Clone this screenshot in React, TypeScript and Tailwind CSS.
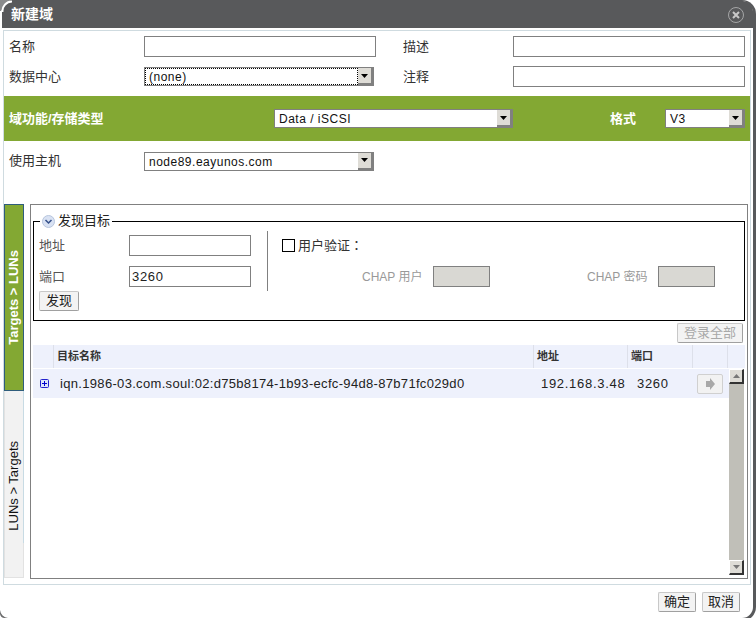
import { useState } from 'react';

const font = "font-['Liberation_Sans','Noto_Sans_CJK_SC',sans-serif]";

function TextInput({ className, value, disabled }: { className: string; value?: string; disabled?: boolean }) {
    return (
        <input
            readOnly
            disabled={disabled}
            defaultValue={value}
            className={`block h-[21px] border border-[#808080] px-[2px] text-[13px] tracking-[0.7px] text-[#222] outline-none ${disabled ? 'bg-[#d9d8d3]' : 'bg-white'} ${className}`}
        />
    );
}

function Select({ className, value, focused }: { className: string; value: string; focused?: boolean }) {
    return (
        <div className={`flex h-[19px] items-stretch border border-[#808080] bg-white font-normal ${className}`}>
            <div className={`flex-1 truncate pl-1 text-[12px] leading-[19px] tracking-[0.5px] text-[#111] ${focused ? 'outline-1 outline-dotted outline-black -outline-offset-1' : ''}`}>
                {value}
            </div>
            <div className="flex w-[15px] items-center justify-center border-r-2 border-b-2 border-[#808080] bg-[#dedcd6]">
                <svg width="7" height="4" viewBox="0 0 7 4"><path d="M0 0h7L3.500 4z" fill="#000" /></svg>
            </div>
        </div>
    );
}

function Btn({ children, className = '', disabled }: { children: string; className?: string; disabled?: boolean }) {
    return (
        <div className={`flex h-[20px] items-center justify-center rounded-[2px] border border-[#c8c8c8] border-b-[#a0a0a0] border-r-[#a0a0a0] bg-[#f3f3f3] text-[13px] ${disabled ? 'text-[#a8a8a8]' : 'text-[#222]'} ${className}`}>
            {children}
        </div>
    );
}

function ScrollBtn({ up }: { up?: boolean }) {
    return (
        <div className="flex h-[15px] items-center justify-center border-r-2 border-b-2 border-l border-t border-[#333] border-l-white border-t-white bg-[#dedcd6]">
            <svg width="7" height="4" viewBox="0 0 7 4">
                <path d={up ? 'M0 4h7L3.500 0z' : 'M0 0h7L3.500 4z'} fill="#777" />
            </svg>
        </div>
    );
}

export default function App() {
    const [tab] = useState(0);

    return (
        <div className={`${font} relative h-[618px] w-[756px] overflow-hidden bg-white`}>
            <div className="h-[621px] rounded-tr-[14px] rounded-br-[14px] border-t border-r-[3px] border-b-[3px] border-[#58595b] pl-[2px]">
                {/* Title bar */}
                <div className="flex h-[27px] items-center justify-between rounded-tr-[10px] bg-[#58595b] pr-[9px] pl-[9px]">
                    <span className="text-[14px] font-bold text-white">新建域</span>
                    <svg width="16" height="16" viewBox="0 0 16 16" fill="none">
                        <circle cx="8" cy="8" r="7.500" stroke="#a5a6a7" strokeWidth="1" />
                        <path d="M5 5l6 6M11 5l-6 6" stroke="#c8c8c8" strokeWidth="2" />
                    </svg>
                </div>

                {/* Panel */}
                <div className="mt-[2px] ml-[1px] h-[555px] w-[748px] border border-[#cfdbe0] pt-[5px]">
                    <div className="flex h-[21px] items-center pl-[5px] text-[13px] text-[#333]">
                        <span className="w-[135px]">名称</span>
                        <TextInput className="w-[232px]" />
                        <span className="ml-[27px] w-[110px]">描述</span>
                        <TextInput className="w-[232px]" />
                    </div>
                    <div className="mt-[9px] flex h-[21px] items-center pl-[5px] text-[13px] text-[#333]">
                        <span className="w-[135px]">数据中心</span>
                        <Select className="w-[230px]" value="(none)" focused />
                        <span className="ml-[29px] w-[110px]">注释</span>
                        <TextInput className="w-[232px]" />
                    </div>

                    {/* Green band */}
                    <div className="mt-[9px] flex h-[45px] items-center bg-[#83a833] pl-[5px] text-[13px] font-bold text-white">
                        <span className="w-[265px]">域功能/存储类型</span>
                        <Select className="w-[239px]" value="Data / iSCSI" />
                        <span className="ml-[97px] w-[55px]">格式</span>
                        <Select className="w-[80px]" value="V3" />
                    </div>

                    <div className="mt-[10px] flex h-[20px] items-center pl-[5px] text-[13px] text-[#333]">
                        <span className="w-[135px]">使用主机</span>
                        <Select className="w-[230px]" value="node89.eayunos.com" />
                    </div>

                    <div className="mt-[33px] flex h-[375px]">
                        {/* Vertical tabs */}
                        <div className="relative flex w-[20px] shrink-0 flex-col text-[13px]">
                            <div className={`flex h-[187px] items-center justify-center border border-[#2f5d7c] ${tab === 0 ? 'bg-[#83a833]' : ''} font-bold text-white`}>
                                <span className="rotate-180 whitespace-nowrap [writing-mode:vertical-rl]">Targets &gt; LUNs</span>
                            </div>
                            <div className="flex h-[187px] items-center justify-center border-r border-b border-l border-[#e2e2e2] bg-[#f2f2f2] pt-[3px] text-[#111]">
                                <span className="rotate-180 whitespace-nowrap [writing-mode:vertical-rl]">LUNs &gt; Targets</span>
                            </div>
                            <div className="absolute top-[187px] right-0 h-[152px] w-px bg-[#c8dbe4]" />
                        </div>

                        {/* Tab content */}
                        <div className="ml-[6px] flex h-[375px] w-[718px] flex-col border border-[#808080] px-[2px] pt-[9px] pb-[3px]">
                            <fieldset className="h-[107px] shrink-0 border border-black px-[5px] pt-[3px]">
                                <legend className="ml-px flex items-center gap-[3px] px-[2px] text-[13px] leading-[14px] text-[#222]">
                                    <svg width="13" height="13" viewBox="0 0 13 13" fill="none">
                                        <circle cx="6.500" cy="6.500" r="6" fill="#d9e2f3" stroke="#b6c4dc" />
                                        <path d="M3.500 5l3 3 3-3" stroke="#34508a" strokeWidth="1.500" />
                                    </svg>
                                    发现目标
                                </legend>
                                <div className="flex h-[60px] text-[13px] text-[#555]">
                                    <div className="w-[228px] shrink-0 pt-[4px]">
                                        <div className="flex h-[21px] items-center">
                                            <span className="w-[90px]">地址</span>
                                            <TextInput className="w-[122px]" />
                                        </div>
                                        <div className="mt-[10px] flex h-[21px] items-center">
                                            <span className="w-[90px]">端口</span>
                                            <TextInput className="w-[122px]" value="3260" />
                                        </div>
                                    </div>
                                    <div className="h-[60px] border-l border-[#808080] pt-[4px] pl-[14px]">
                                        <div className="flex h-[21px] items-center gap-[3px] text-[#333]">
                                            <span className="block h-[13px] w-[13px] border border-black bg-white" />
                                            <span>用户验证<span className="font-['Noto_Sans_CJK_TC',sans-serif]">：</span></span>
                                        </div>
                                        <div className="mt-[10px] flex h-[21px] items-center text-[12px] text-[#999]">
                                            <span className="ml-[80px] w-[71px]">CHAP 用户</span>
                                            <TextInput className="w-[57px]" disabled />
                                            <span className="ml-[97px] w-[71px]">CHAP 密码</span>
                                            <TextInput className="w-[57px]" disabled />
                                        </div>
                                    </div>
                                </div>
                                <Btn className="w-[40px]">发现</Btn>
                            </fieldset>

                            <div className="mt-[2px] flex h-[22px] shrink-0 justify-end pr-[2px]">
                                <Btn className="w-[66px]" disabled>登录全部</Btn>
                            </div>

                            {/* Grid header */}
                            <div className="flex h-[23px] shrink-0 items-center bg-[#eef1fc] text-[11px] font-bold text-[#333]">
                                <div className="h-full w-[21px] border-r border-[#dde0ea]" />
                                <div className="flex h-full w-[480px] items-center border-r border-[#dde0ea] pl-[3px]">目标名称</div>
                                <div className="flex h-full w-[94px] items-center border-r border-[#dde0ea] pl-[3px]">地址</div>
                                <div className="flex h-full w-[65px] items-center border-r border-[#dde0ea] pl-[3px]">端口</div>
                                <div className="h-full w-[35px] border-r border-[#dde0ea]" />
                            </div>

                            <div className="mt-px flex min-h-0 flex-1">
                                <div className="flex-1">
                                    <div className="flex h-[29px] items-center bg-[#eef1fc] text-[13px] text-[#222]">
                                        <div className="flex w-[27px] pl-[7px]">
                                            <svg width="9" height="9" viewBox="0 0 9 9" fill="none">
                                                <rect x="0.500" y="0.500" width="8" height="8" rx="1" fill="#dfe6fb" stroke="#2222cc" />
                                                <path d="M4.500 2v5M2 4.500h5" stroke="#0000cc" />
                                            </svg>
                                        </div>
                                        <div className="w-[481px] whitespace-nowrap tracking-[0.32px]">iqn.1986-03.com.soul:02:d75b8174-1b93-ecfc-94d8-87b71fc029d0</div>
                                        <div className="w-[96px] tracking-[0.7px]">192.168.3.48</div>
                                        <div className="w-[60px] tracking-[0.7px]">3260</div>
                                        <div className="flex h-[20px] w-[26px] items-center justify-center rounded-[2px] border border-[#d0d0d0] bg-[#f2f2f2]">
                                            <svg width="10" height="12" viewBox="0 0 10 12"><path d="M1 3h4V0l5 6-5 6V9H1z" fill="#a8a8a8" /></svg>
                                        </div>
                                    </div>
                                </div>
                                <div className="mr-[1px] flex w-[15px] flex-col bg-[#c0bfb8]">
                                    <ScrollBtn up />
                                    <div className="flex-1" />
                                    <ScrollBtn />
                                </div>
                            </div>
                        </div>
                    </div>
                </div>

                {/* Footer buttons */}
                <div className="mt-[7px] flex justify-end gap-[6px] pr-[13px]">
                    <Btn className="w-[38px]">确定</Btn>
                    <Btn className="w-[38px]">取消</Btn>
                </div>
            </div>

            {/* Window corners */}
            <svg className="absolute top-0 left-0" width="12" height="12" viewBox="0 0 12 12" fill="none">
                <path d="M0 0h11L1 11H0z" fill="#8a8b8c" />
                <path d="M2.500 12A9.500 9.500 0 0 1 12 1.500" stroke="#fff" strokeWidth="2" />
            </svg>
            <svg className="absolute bottom-0 left-0" width="10" height="10" viewBox="0 0 10 10" fill="none">
                <path d="M0 2A9 9 0 0 0 8 10H5A5 5 0 0 1 0 6z" fill="#6a6b6c" />
            </svg>
        </div>
    );
}
